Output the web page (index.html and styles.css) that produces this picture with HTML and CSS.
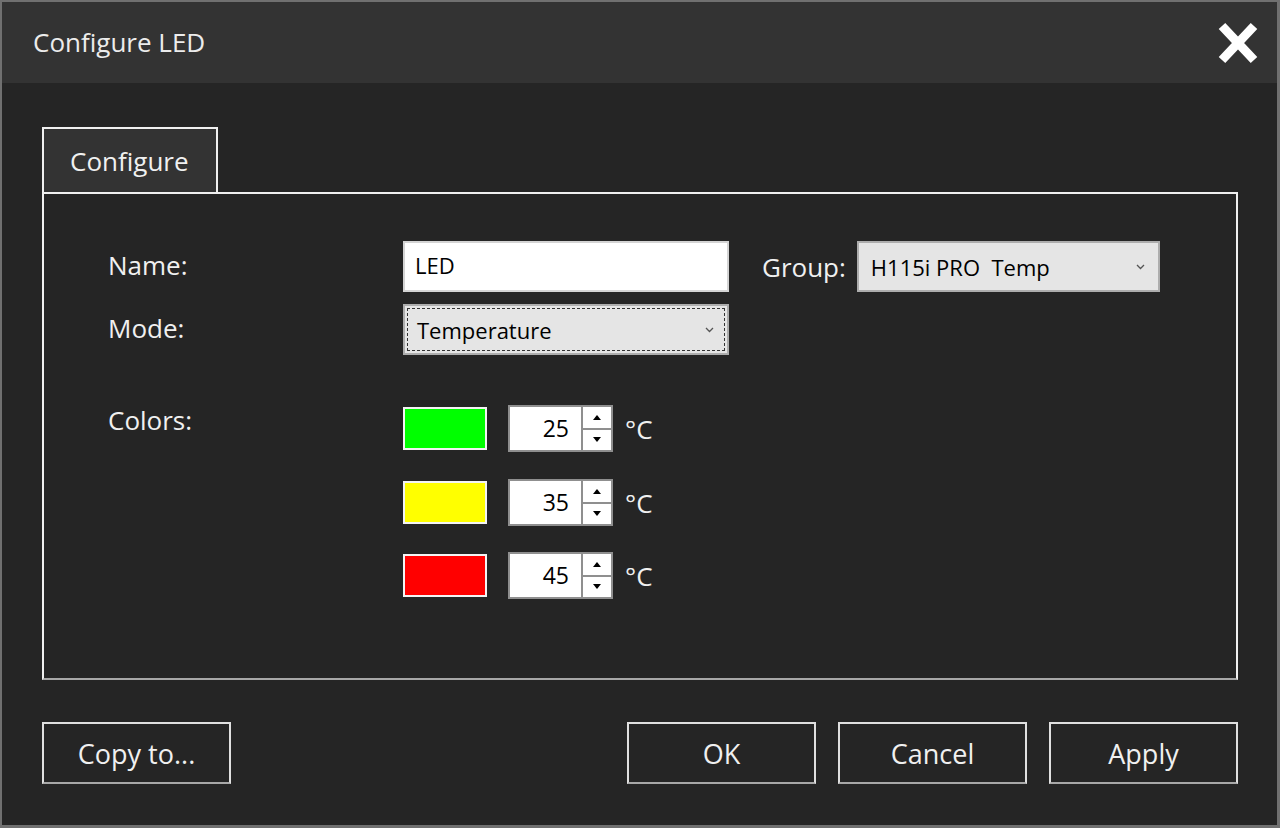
FILE: index.html
```html
<!DOCTYPE html>
<html>
<head>
    <meta name="viewport" content="width=device-width, initial-scale=1.0">
    <title>Configure LED</title>
    <link rel="stylesheet" href="styles.css">
</head>
<body>
    <div class="window">
        <div class="titlebar">
            <span class="title">Configure LED</span>
            <svg class="close" width="42" height="44" viewBox="0 0 42 44">
                <path d="M5 5 L37 39 M37 5 L5 39" stroke="#fff" stroke-width="9" fill="none"/>
            </svg>
        </div>
        <div class="content">
            <div class="tabs">
                <div class="tab">Configure</div>
            </div>
            <div class="panel">
                <div class="row">
                    <label class="lbl">Name:</label>
                    <div class="textbox">LED</div>
                    <label class="lbl-group">Group:</label>
                    <div class="combo group">
                        <span>H115i PRO&nbsp; Temp</span>
                        <svg class="chev" width="9" height="6" viewBox="0 0 9 6"><path d="M1 1 L4.5 4.5 L8 1" stroke="#555" stroke-width="1.3" fill="none"/></svg>
                    </div>
                </div>
                <div class="row mode">
                    <label class="lbl">Mode:</label>
                    <div class="combo focused">
                        <span>Temperature</span>
                        <svg class="chev" width="9" height="6" viewBox="0 0 9 6"><path d="M1 1 L4.5 4.5 L8 1" stroke="#555" stroke-width="1.3" fill="none"/></svg>
                    </div>
                </div>
                <div class="row colors">
                    <label class="lbl">Colors:</label>
                    <div class="color-list">
                        <div class="color-item">
                            <span class="swatch green"></span>
                            <div class="spin"><span class="val">25</span><div class="arrows"><span class="up"></span><span class="down"></span></div></div>
                            <span class="unit">°C</span>
                        </div>
                        <div class="color-item">
                            <span class="swatch yellow"></span>
                            <div class="spin"><span class="val">35</span><div class="arrows"><span class="up"></span><span class="down"></span></div></div>
                            <span class="unit">°C</span>
                        </div>
                        <div class="color-item">
                            <span class="swatch red"></span>
                            <div class="spin"><span class="val">45</span><div class="arrows"><span class="up"></span><span class="down"></span></div></div>
                            <span class="unit">°C</span>
                        </div>
                    </div>
                </div>
            </div>
            <div class="footer">
                <button class="btn">Copy to...</button>
                <div class="spacer"></div>
                <button class="btn">OK</button>
                <button class="btn">Cancel</button>
                <button class="btn">Apply</button>
            </div>
        </div>
    </div>
</body>
</html>
```

FILE: styles.css
```css
body { margin: 0; font-family: "Open Sans", "Noto Sans", sans-serif; background: #252525; }
.window { width: 1280px; height: 828px; box-sizing: border-box; border: 2px solid #707070; border-right-width: 3px; border-bottom-width: 3px; background: #252525; color: #f0f0f0; }

.titlebar { height: 81px; background: #333333; display: flex; align-items: center; justify-content: space-between; padding: 0 18px 0 31px; }
.title { font-size: 26px; color: #ececec; margin-top: -1px; }
.close { display: block; margin-top: 1px; }

.content { padding: 44px 39px 0 40px; }
.tabs { display: flex; }
.tab { width: 176px; height: 65px; box-sizing: border-box; border: 2px solid #f0f0f0; border-bottom: none; background: #333333; font-size: 26px; display: flex; align-items: center; padding-left: 26px; }
.panel { height: 488px; box-sizing: border-box; border: 2px solid #f0f0f0; border-bottom-color: #a8a8a8; padding: 47px 0 0 64px; }

.row { display: flex; align-items: center; }
.row.mode { margin-top: 12px; }
.row.colors { margin-top: 49px; align-items: flex-start; }
.lbl { width: 295px; font-size: 26px; margin-top: -4px; }
.row.colors .lbl { line-height: 32px; margin-top: 0; }
.lbl-group { font-size: 26px; margin: 0 11px 0 33px; }

.textbox { width: 326px; height: 51px; box-sizing: border-box; background: #fff; border: 2px solid #d4d4d4; color: #000; font-size: 22px; display: flex; align-items: center; padding: 0 0 3px 10px; }
.combo { width: 326px; height: 51px; box-sizing: border-box; background: #e5e5e5; border: 2px solid #adadad; color: #000; font-size: 22px; display: flex; align-items: center; justify-content: space-between; padding: 0 13px 0 12px; position: relative; }
.combo.group { width: 303px; }
.combo.focused::after { content: ""; position: absolute; left: 2px; top: 2px; right: 2px; bottom: 2px; border: 1px dashed #333; }
.chev { display: block; }

.color-list { display: flex; flex-direction: column; gap: 27px; margin-top: 1px; }
.color-item { display: flex; align-items: center; height: 47px; }
.color-item + .color-item + .color-item { margin-top: -1px; }
.swatch { width: 84px; height: 43px; box-sizing: border-box; border: 2px solid #f4f4f4; }
.swatch.green { background: #00ff00; }
.swatch.yellow { background: #ffff00; }
.swatch.red { background: #ff0000; }
.spin { width: 105px; height: 47px; box-sizing: border-box; margin-left: 21px; border: 2px solid #8f8f8f; background: #fff; display: flex; }
.val { flex: 1; color: #000; font-size: 23px; text-align: right; padding-right: 12px; line-height: 43px; }
.arrows { width: 28px; border-left: 2px solid #8f8f8f; display: flex; flex-direction: column; }
.arrows span { flex: 1; display: flex; align-items: center; justify-content: center; }
.arrows .up { border-bottom: 2px solid #8f8f8f; }
.arrows .up::before { content: ""; border: 4px solid transparent; border-bottom: 5px solid #000; border-top: none; }
.arrows .down::before { content: ""; border: 4px solid transparent; border-top: 5px solid #000; border-bottom: none; }
.unit { font-size: 26px; margin-left: 12px; }

.footer { display: flex; gap: 22px; margin-top: 42px; }
.spacer { flex: 1; }
.btn { width: 189px; height: 62px; box-sizing: border-box; background: #252525; color: #f0f0f0; border: 2px solid #e0e0e0; border-bottom-color: #a8a8a8; font-family: "Open Sans", "Noto Sans", sans-serif; font-size: 27px; padding: 0; }
```
